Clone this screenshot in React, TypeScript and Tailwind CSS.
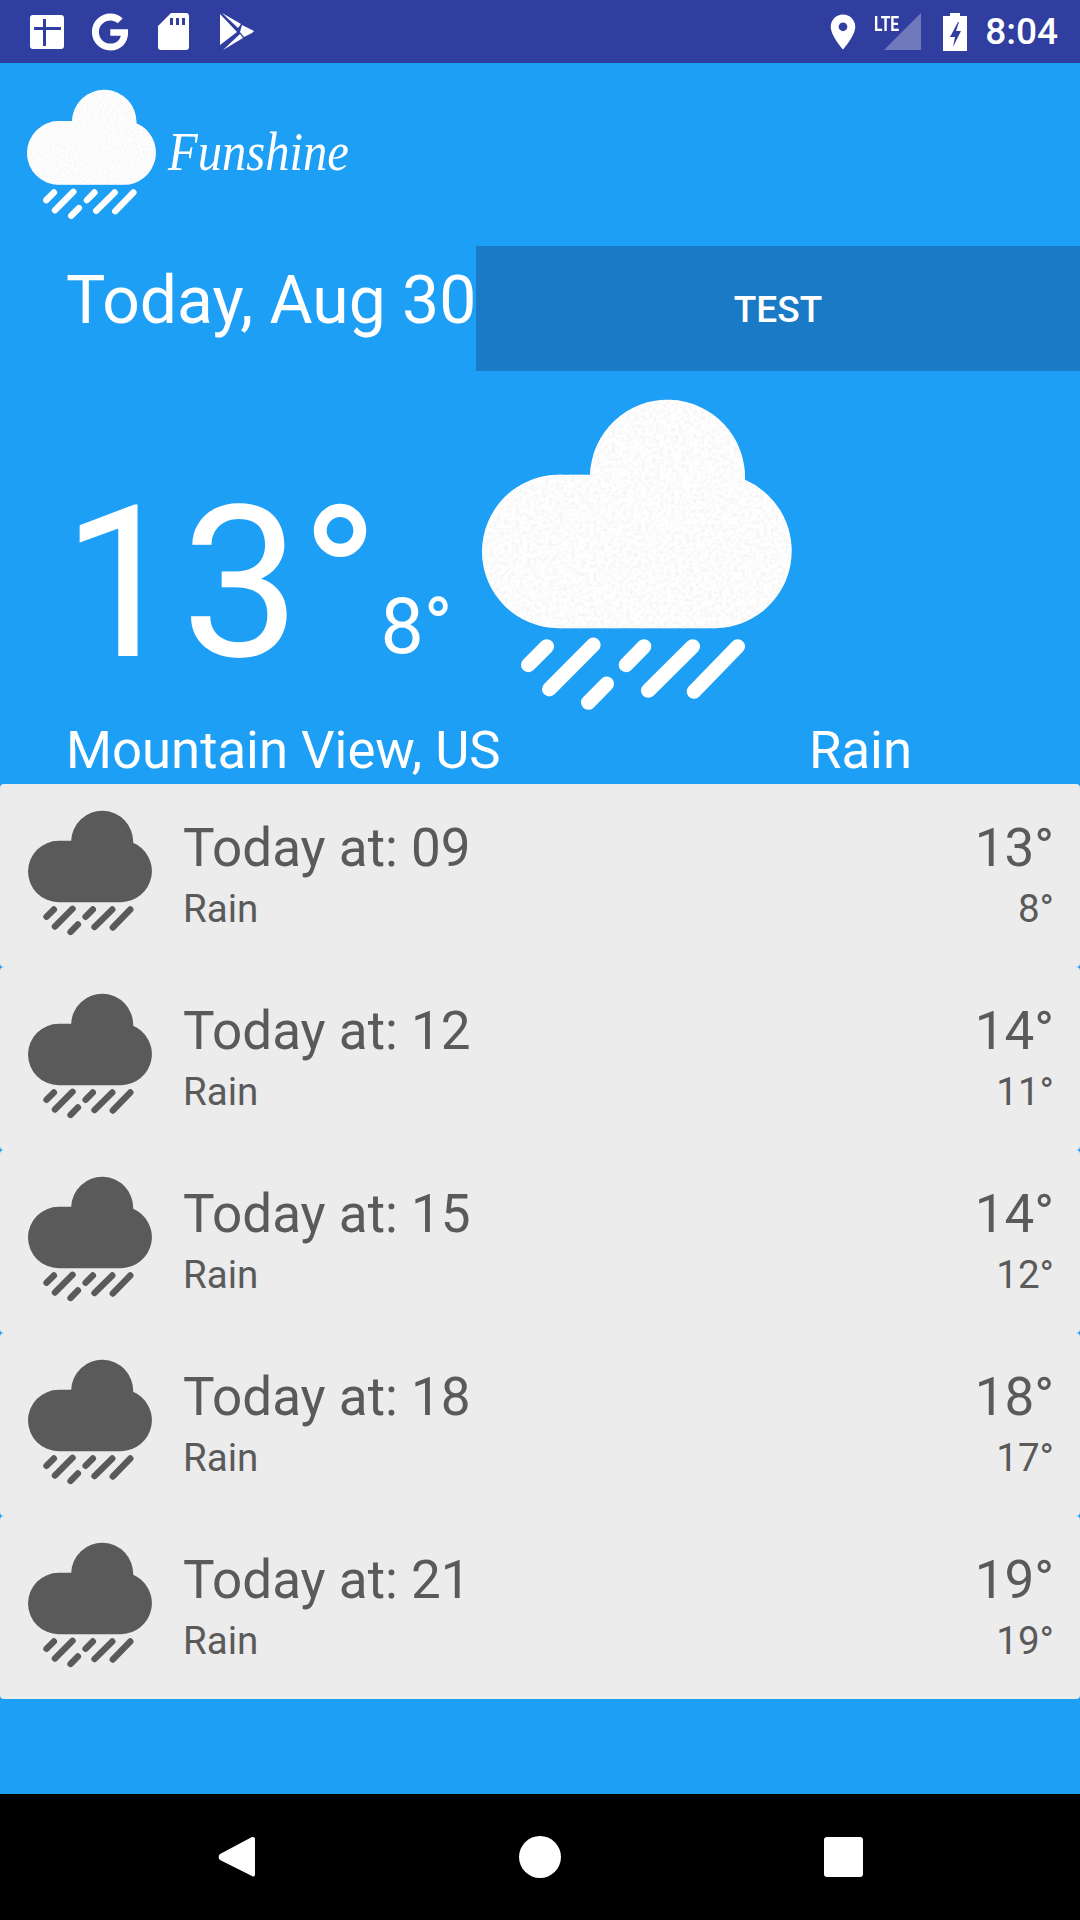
import React from "react";
import { FaGoogle } from "react-icons/fa";
import { MdPlace } from "react-icons/md";

type Forecast = { hour: string; high: string; low: string };

const forecasts: Forecast[] = [
  { hour: "09", high: "13°", low: "8°" },
  { hour: "12", high: "14°", low: "11°" },
  { hour: "15", high: "14°", low: "12°" },
  { hour: "18", high: "18°", low: "17°" },
  { hour: "21", high: "19°", low: "19°" },
];

function RainCloud({ color, className, id, stroke = 38 }: { color: string; className: string; id?: string; stroke?: number }) {
  const rain = [
    [205, 855, 260, 800],
    [268, 928, 400, 795],
    [385, 968, 440, 912],
    [498, 855, 552, 800],
    [565, 932, 698, 800],
    [702, 935, 833, 800],
  ];
  return (
    <svg viewBox="66 55 930 935" className={className}>
      {id && (
        <filter id={id} x="0" y="0" width="100%" height="100%">
          <feTurbulence type="fractalNoise" baseFrequency="0.09" numOctaves="3" seed="4" />
          <feColorMatrix values="0 0 0 0 0.9  0 0 0 0 0.9  0 0 0 0 0.9  2.4 0 0 0 -0.95" />
          <feComposite in2="SourceGraphic" operator="in" />
          <feMerge>
            <feMergeNode in="SourceGraphic" />
            <feMergeNode />
          </feMerge>
        </filter>
      )}
      <path
        d="M296 745A230 230 0 0 1 296 285L390 285A232 232 0 0 1 855 300A232 232 0 0 1 765 745Z"
        fill={color}
        filter={id ? `url(#${id})` : undefined}
      />
      {rain.map((r, i) => (
        <line key={i} x1={r[0]} y1={r[1]} x2={r[2]} y2={r[3]} stroke={color} strokeWidth={stroke} strokeLinecap="round" />
      ))}
    </svg>
  );
}

function StatusBar() {
  return (
    <div className="h-[63px] shrink-0 bg-[#303f9f] flex items-center text-white">
      <svg viewBox="0 0 34 34" className="ml-[30px] w-[34px] h-[34px]">
        <path d="M3 0h28a3 3 0 0 1 3 3v28a3 3 0 0 1-3 3H3a3 3 0 0 1-3-3V3a3 3 0 0 1 3-3Z" fill="#fff" />
        <path d="M13 4h3v8h15v3H16v16h-3V15H4v-3h9Z" fill="#303f9f" />
      </svg>
      <FaGoogle className="ml-[27px] w-[38px] h-[38px]" />
      <svg viewBox="0 0 31 37" className="ml-[29px] w-[31px] h-[37px]">
        <path
          fillRule="evenodd"
          d="M13 0h15a3 3 0 0 1 3 3v31a3 3 0 0 1-3 3H3a3 3 0 0 1-3-3V13ZM12 5v7h3V5Zm6 0v7h3V5Zm6 0v7h3V5Z"
          fill="#fff"
        />
      </svg>
      <svg viewBox="0 0 34 37" className="ml-[31px] w-[34px] h-[37px]">
        <path d="M0 0l17 18L0 31Z" fill="#fff" transform="translate(0 1)" />
        <path d="M2 0l19 11-3 4Z" fill="#fff" />
        <path d="M22 12l12 6-2 2-8 4-4-5Z" fill="#fff" />
        <path d="M3 37l20-12-3-4Z" fill="#fff" />
      </svg>
      <MdPlace className="ml-auto w-[42px] h-[42px]" />
      <div className="relative ml-[10px] w-[47px] h-[38px]">
        <svg viewBox="0 0 37 37" className="absolute right-0 top-0 w-[37px] h-[37px]">
          <path d="M37 0v37H0Z" fill="#7079bb" />
        </svg>
        <span className="absolute left-0 -top-[1px] text-[20px] leading-[24px] font-bold scale-x-[.78] origin-left font-['Roboto',sans-serif]">
          LTE
        </span>
      </div>
      <svg viewBox="0 0 24 38" className="ml-[22px] w-[24px] h-[38px]">
        <path
          fillRule="evenodd"
          d="M7 0h10v3h7v35H0V3h7ZM15 9l-8 15h5l-2 10 8-16h-5l3-9Z"
          fill="#fff"
        />
      </svg>
      <span className="ml-[18px] mr-[22px] text-[37px] font-medium font-['Roboto',sans-serif]">8:04</span>
    </div>
  );
}

function NavBar() {
  return (
    <div className="h-[126px] shrink-0 bg-black flex items-center">
      <svg viewBox="0 0 37 42" className="ml-[218px] w-[37px] h-[42px]">
        <path d="M35 1a2 2 0 0 1 2 2v36a2 2 0 0 1-3 1L2 24a4 4 0 0 1 0-6L34 1Z" fill="#fff" />
      </svg>
      <div className="ml-[264px] w-[42px] h-[42px] rounded-full bg-white" />
      <div className="ml-[263px] w-[39px] h-[40px] rounded-[3px] bg-white" />
    </div>
  );
}

function ForecastCard({ item }: { item: Forecast }) {
  return (
    <div className="h-[183px] bg-[#ececec] rounded-[4px] flex text-[#5a5a5a]">
      <RainCloud color="#5a5a5a" stroke={48} className="ml-[28px] mt-[24px] w-[124px] h-[129px] shrink-0" />
      <div className="ml-[31px] pt-[31px]">
        <div className="text-[53px] leading-[66px]">Today at: {item.hour}</div>
        <div className="text-[38.5px] leading-[48px] mt-[4px]">Rain</div>
      </div>
      <div className="ml-auto pr-[26px] pt-[31px] text-right">
        <div className="text-[53px] leading-[66px]">{item.high}</div>
        <div className="text-[38.5px] leading-[48px] mt-[4px]">{item.low}</div>
      </div>
    </div>
  );
}

export default function App() {
  return (
    <div className="w-[1080px] h-[1920px] flex flex-col bg-[#1c9ff5] font-['Roboto',sans-serif]">
      <StatusBar />
      <div className="flex-1 text-white">
        <div className="h-[183px] flex items-start pl-[27px] pt-[26px]">
          <RainCloud color="#ffffff" id="logoNoise" stroke={46} className="w-[129px] h-[130px]" />
          <span className="ml-[12px] mt-[30px] text-[54px] leading-[66px] italic scale-x-[.9] origin-left font-['Liberation_Serif',cursive]">
            Funshine
          </span>
        </div>
        <div className="h-[125px] flex items-center">
          <div className="w-[476px] pl-[66px] pb-[15px] text-[66px] leading-[80px] whitespace-nowrap">Today, Aug 30</div>
          <button className="flex-1 h-full bg-[#1a7ac6] pt-[2px] text-[37px] font-medium">TEST</button>
        </div>
        <div className="h-[340px] flex items-start">
          <div className="w-[482px] pl-[62px] pt-[88px] flex items-baseline">
            <span className="text-[212px] leading-[250px]">13°</span>
            <span className="ml-[1px] text-[77px] leading-[90px] -translate-y-[3px]">8°</span>
          </div>
          <RainCloud color="#ffffff" id="bigNoise" stroke={44} className="mt-[27px] w-[310px] h-[312px]" />
        </div>
        <div className="h-[73px] flex items-start pl-[66px] text-[52.7px] leading-[70px] mt-[4px]">
          <span>Mountain View, US</span>
          <span className="ml-auto mr-[168px]">Rain</span>
        </div>
        <div className="-mt-[4px]">
          {forecasts.map((f) => (
            <ForecastCard key={f.hour} item={f} />
          ))}
        </div>
      </div>
      <NavBar />
    </div>
  );
}
